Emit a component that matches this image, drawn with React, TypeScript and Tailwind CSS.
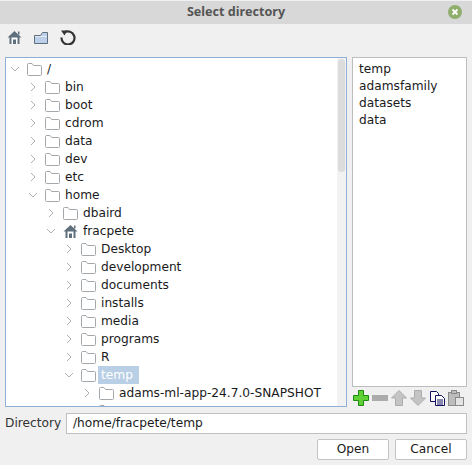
function Folder() {
  return (
    <svg width="15" height="13" viewBox="0 0 15 13" className="shrink-0">
      <path d="M0.500 3V1.500a1 1 0 0 1 1-1h3.500l1.500 2h7a1 1 0 0 1 1 1v8a1 1 0 0 1-1 1h-12a1 1 0 0 1-1-1z" fill="#fff" stroke="#a3a8ad" strokeWidth="1" />
    </svg>
  );
}

function HomeIcon({ size = 15 }: { size?: number }) {
  return (
    <svg width={size} height={size} viewBox="0 0 15 15" className="shrink-0">
      <path d="M7.500 1L0.500 7.500h2v6.500h10V7.500h2z" fill="#5f6f7c" />
      <path d="M4.500 7.500h6V14h-1.500V9.500h-3V14H4.500z" fill="#fff" />
      <rect x="11" y="1.500" width="1.500" height="3" fill="#5f6f7c" />
    </svg>
  );
}

function Row({ depth, name, open, selected, home }: { depth: number; name: string; open?: boolean; selected?: boolean; home?: boolean }) {
  return (
    <div className="flex h-[18px] items-center shrink-0" style={{ paddingLeft: 3 + depth * 18 }}>
      <svg width="12" height="12" viewBox="0 0 12 12" className="shrink-0 mr-[6px]">
        {open ? (
          <path d="M2 4l4 4 4-4" fill="none" stroke="#b0b0b0" strokeWidth="1" />
        ) : (
          <path d="M4 2l4 4-4 4" fill="none" stroke="#b0b0b0" strokeWidth="1" />
        )}
      </svg>
      <div className="w-[15px] flex justify-center">{home ? <HomeIcon /> : <Folder />}</div>
      {name && (
        <span className={selected ? "ml-[2px] pl-[3px] pr-[6px] bg-[#b8cfe5] text-white h-[18px] leading-[18px]" : "ml-[5px] leading-[18px]"}>{name}</span>
      )}
    </div>
  );
}

const rows = [
  { depth: 0, name: "/", open: true },
  { depth: 1, name: "bin" },
  { depth: 1, name: "boot" },
  { depth: 1, name: "cdrom" },
  { depth: 1, name: "data" },
  { depth: 1, name: "dev" },
  { depth: 1, name: "etc" },
  { depth: 1, name: "home", open: true },
  { depth: 2, name: "dbaird" },
  { depth: 2, name: "fracpete", open: true, home: true },
  { depth: 3, name: "Desktop" },
  { depth: 3, name: "development" },
  { depth: 3, name: "documents" },
  { depth: 3, name: "installs" },
  { depth: 3, name: "media" },
  { depth: 3, name: "programs" },
  { depth: 3, name: "R" },
  { depth: 3, name: "temp", open: true, selected: true },
  { depth: 4, name: "adams-ml-app-24.7.0-SNAPSHOT" },
  { depth: 4, name: "" },
];

export default function App() {
  return (
    <div className="w-[472px] h-[465px] flex flex-col bg-[#f0f0f0] text-[#1a1a1a] text-[12.2px] overflow-hidden" style={{ fontFamily: '"DejaVu Sans", sans-serif' }}>
      <div className="h-[23px] mt-px bg-[#d8d8d8] flex items-center justify-center relative font-bold text-[#555] text-[12.6px]" style={{ fontFamily: '"Noto Sans", sans-serif' }}>
        Select directory
        <div className="absolute right-[10px] top-[4px] w-[14px] h-[14px] rounded-full bg-[#8fae6b] flex items-center justify-center">
          <svg width="8" height="8" viewBox="0 0 8 8">
            <path d="M1.500 1.500l5 5M6.500 1.500l-5 5" stroke="#fff" strokeWidth="1.800" />
          </svg>
        </div>
      </div>
      <div className="h-[33px] flex items-start pt-[5px] pl-[7px]">
        <div className="mt-[1px]"><HomeIcon size={15} /></div>
        <svg width="14" height="12" viewBox="0 0 14 12" className="ml-[12px] mt-[3px]">
          <path d="M0.500 3.500h6l2-3h5v11H0.500z" fill="#bcd0ea" stroke="#5f6f7c" />
          <path d="M1 4h12v1H1z" fill="#e4ecf5" />
        </svg>
        <svg width="16" height="16" viewBox="0 0 16 16" fill="none" stroke="#333" strokeWidth="2.200" className="ml-[12px]">
          <path d="M4.500 3.500a6.500 6.500 0 1 1-3 5" />
          <path d="M1 1.500l6 0-2.500 5z" fill="#333" stroke="none" />
        </svg>
      </div>
      <div className="flex h-[350px] pl-[5px]">
        <div className="w-[342px] h-full border border-[#8fb0d6] bg-white flex overflow-hidden">
          <div className="flex-1 pt-[2px] flex flex-col overflow-hidden whitespace-nowrap">
            {rows.map((r) => (
              <Row key={r.name} {...r} />
            ))}
          </div>
          <div className="w-[9px] bg-[#f2f2f2] pt-[1px] flex justify-center">
            <div className="w-[7px] h-[113px] rounded-full bg-[#dcdcdc]" />
          </div>
        </div>
        <div className="ml-[5px] w-[115px] flex flex-col">
          <div className="h-[330px] border border-[#bdbdbd] bg-white pl-[6px] pt-[3px] leading-[17px] flex flex-col">
            <span>temp</span>
            <span>adamsfamily</span>
            <span>datasets</span>
            <span>data</span>
          </div>
          <div className="flex items-center h-[20px] pt-[2px] pl-[1px]">
            <svg width="16" height="16" viewBox="0 0 16 16">
              <path d="M5.500 0.500h5v5h5v5h-5v5h-5v-5h-5v-5h5z" fill="#5fd136" stroke="#1d8a12" />
            </svg>
            <svg width="16" height="6" viewBox="0 0 16 6" className="ml-[3px]">
              <rect width="16" height="6" fill="#acacac" />
            </svg>
            <svg width="16" height="16" viewBox="0 0 16 16" className="ml-[3px]">
              <path d="M8 0.500L15.500 8H11.500V15.500H4.500V8H0.500z" fill="#c4c4c4" stroke="#acacac" />
            </svg>
            <svg width="16" height="16" viewBox="0 0 16 16" className="ml-[3px]">
              <path d="M8 15.500L15.500 8H11.500V0.500H4.500V8H0.500z" fill="#c4c4c4" stroke="#acacac" />
            </svg>
            <svg width="15" height="15" viewBox="0 0 15 15" className="ml-[4px]">
              <path d="M0.500 0.500h6l2 2v8h-8z" fill="#fff" stroke="#101060" />
              <path d="M5.500 4.500h6l3 3v7h-9z" fill="#fff" stroke="#101060" />
              <path d="M7 9h6M7 11h6M7 13h6" stroke="#101060" />
            </svg>
            <svg width="16" height="16" viewBox="0 0 16 16" className="ml-[3px]">
              <rect x="0.500" y="2.500" width="11" height="13" fill="#bdbdbd" stroke="#8a8a8a" />
              <rect x="3.500" y="0.500" width="5" height="3" fill="#bdbdbd" stroke="#8a8a8a" />
              <rect x="7.500" y="7.500" width="8" height="8" fill="#e4e4e4" stroke="#8a8a8a" />
            </svg>
          </div>
        </div>
      </div>
      <div className="flex items-center h-[21px] mt-[6px] pl-[5px] pr-[5px]">
        <span className="w-[61px] text-[#333]">Directory</span>
        <div className="flex-1 h-full border border-[#c0c0c0] bg-white pl-[6px] flex items-center">/home/fracpete/temp</div>
      </div>
      <div className="flex justify-end gap-[6px] pr-[5px] mt-[5px]">
        <div className="w-[72px] h-[21px] border border-[#c4c4c4] rounded-[2px] bg-white flex items-center justify-center">Open</div>
        <div className="w-[72px] h-[21px] border border-[#c4c4c4] rounded-[2px] bg-white flex items-center justify-center">Cancel</div>
      </div>
    </div>
  );
}
